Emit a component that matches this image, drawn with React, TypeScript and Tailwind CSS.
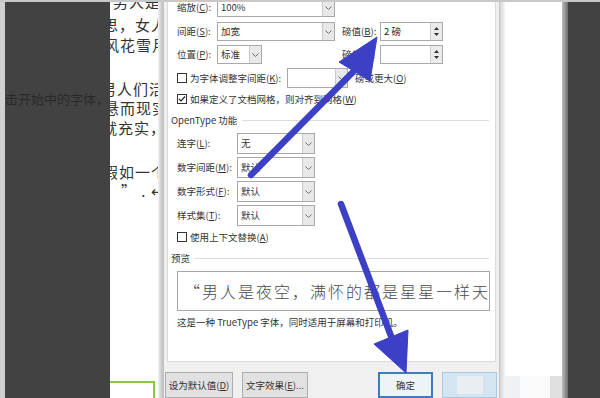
const ui = "font-['Noto_Sans_CJK_SC',sans-serif]"

function Chevron() {
  return (
    <svg width="7" height="4" viewBox="0 0 7 4">
      <path d="M0.5 0.5 L3.5 3.5 L6.5 0.5" fill="none" stroke="#6b6b6b" strokeWidth="1" />
    </svg>
  )
}

function Select({ className, value }: { className: string; value: string }) {
  return (
    <div className={`flex h-full items-stretch border border-[#a9a9a9] bg-white ${className}`}>
      <span className="flex flex-1 items-center pl-[3px] text-[#333]">{value}</span>
      <span className="flex w-[12px] items-center justify-center border-l border-[#c9c9c9] bg-[#e8e8e8]">
        <Chevron />
      </span>
    </div>
  )
}

function Spin({ value }: { value: string }) {
  return (
    <div className="flex h-full w-[63px] border border-[#a9a9a9] bg-white">
      <span className="flex flex-1 items-center pl-[3px] text-[#222]">{value}</span>
      <span className="flex w-[12px] flex-col items-center justify-center gap-[3px] border-l border-[#d0d0d0] bg-[#ececec]">
        <svg width="5" height="3" viewBox="0 0 5 3">
          <path d="M0 3 L2.5 0 L5 3Z" fill="#333" />
        </svg>
        <svg width="5" height="3" viewBox="0 0 5 3">
          <path d="M0 0 L2.5 3 L5 0Z" fill="#333" />
        </svg>
      </span>
    </div>
  )
}

function Check({ on }: { on?: boolean }) {
  return (
    <span className="flex h-[10px] w-[10px] shrink-0 items-center justify-center border border-[#333] bg-white">
      {on && (
        <svg width="8" height="8" viewBox="0 0 8 8">
          <path d="M1 4 L3 6 L7 1.5" fill="none" stroke="#222" strokeWidth="1.2" />
        </svg>
      )}
    </span>
  )
}

function Group({ title }: { title: string }) {
  return (
    <div className="ml-[-6px] flex items-center">
      <span className="text-[#333]">{title}</span>
      <span className="ml-[5px] mr-[6px] h-px flex-1 bg-[#dcdcdc]" />
    </div>
  )
}

function FeatureRow({ label, value, mt }: { label: React.ReactNode; value: string; mt: string }) {
  return (
    <div className={`flex h-[21px] items-center ${mt}`}>
      <span className="w-[60px] text-[#333]">{label}</span>
      <Select className="w-[78px]" value={value} />
    </div>
  )
}

function Dialog() {
  return (
    <div className={`flex h-full w-[337px] flex-col border-x border-[#c4c4c4] bg-[#f0f0f0] text-[9.5px] ${ui}`}>
      {/* tab panel */}
      <div className="ml-[3px] flex h-[363px] w-[329px] flex-col overflow-hidden border-x border-b border-[#dadada] bg-white pl-[9px]">
        <div className="mt-[-4px] flex h-[19px] items-center">
          <span className="w-[40px] text-[#333]">缩放(<u>C</u>):</span>
          <Select className="w-[118px]" value="100%" />
        </div>

        <div className="mt-[5px] flex h-[19px] items-center">
          <div className="flex h-full w-[158px] items-center">
            <span className="w-[40px] text-[#333]">间距(<u>S</u>):</span>
            <Select className="w-[118px]" value="加宽" />
          </div>
          <span className="ml-[7px] w-[38px] text-[#333]">磅值(<u>B</u>):</span>
          <Spin value="2 磅" />
        </div>

        <div className="mt-[4px] flex h-[19px] items-center">
          <div className="flex h-full w-[158px] items-center">
            <span className="w-[40px] text-[#333]">位置(<u>P</u>):</span>
            <Select className="w-[45px]" value="标准" />
          </div>
          <span className="ml-[7px] w-[38px] text-[#333]">磅值(<u>Y</u>):</span>
          <Spin value="" />
        </div>

        <div className="mt-[4px] flex h-[20px] items-center">
          <Check />
          <span className="ml-[3px] w-[97px] text-[#333]">为字体调整字间距(<u>K</u>):</span>
          <Select className="w-[61px]" value="" />
          <span className="ml-[7px] text-[#333]">磅或更大(<u>O</u>)</span>
        </div>

        <div className="mt-[4px] flex h-[14px] items-center">
          <Check on />
          <span className="ml-[3px] text-[#333]">如果定义了文档网格，则对齐到网格(<u>W</u>)</span>
        </div>

        <div className="mt-[7px] h-[14px]">
          <Group title="OpenType 功能" />
        </div>

        <FeatureRow mt="mt-[6px]" label={<>连字(<u>L</u>):</>} value="无" />
        <FeatureRow mt="mt-[3px]" label={<>数字间距(<u>M</u>):</>} value="默认" />
        <FeatureRow mt="mt-[3px]" label={<>数字形式(<u>F</u>):</>} value="默认" />
        <FeatureRow mt="mt-[3px]" label={<>样式集(<u>T</u>):</>} value="默认" />

        <div className="mt-[4px] flex h-[14px] items-center">
          <Check />
          <span className="ml-[3px] text-[#333]">使用上下文替换(<u>A</u>)</span>
        </div>

        <div className="mt-[7px] h-[14px]">
          <Group title="预览" />
        </div>

        <div className="mt-[6px] flex h-[40px] w-[313px] items-center overflow-hidden border border-[#a6a6a6] bg-white pl-[6px]">
          <span className="whitespace-nowrap text-[16px] font-light tracking-[2px] text-[#4a4a4a]">
            “男人是夜空，满怀的都是星星一样天真的梦
          </span>
        </div>

        <div className="mt-[4px] flex h-[14px] items-center text-[#333]">
          这是一种 TrueType 字体，同时适用于屏幕和打印机。
        </div>
      </div>

      {/* buttons */}
      <div className="flex pt-[10px]">
        <button className="ml-[1px] h-[26px] w-[68px] border border-[#adadad] bg-[#e1e1e1] text-[#333]">
          设为默认值(<u>D</u>)
        </button>
        <button className="ml-[9px] h-[26px] w-[66px] border border-[#adadad] bg-[#e1e1e1] text-[#333]">
          文字效果(<u>E</u>)...
        </button>
        <button className="ml-[70px] h-[26px] w-[55px] border-2 border-[#3d7dbd] bg-[#eef3f8] text-[#333]">
          确定
        </button>
        <div className="ml-[9px] flex h-[26px] w-[55px] items-center border border-[#a9c9e2] bg-[#d3e5f2] pl-[14px]">
          <span className="h-[18px] w-[26px] bg-[#e9eef2]" />
        </div>
      </div>
    </div>
  )
}

function PageText() {
  const lines = [
    { t: "男人是", c: "mt-[-10px] ml-[10px]" },
    { t: "思，女人", c: "mt-[3px]" },
    { t: "风花雪月", c: "mt-0 ml-[1px]" },
    { t: "男人们活", c: "mt-[24px] ml-[-2px]" },
    { t: "悬而现实", c: "mt-[-1px] ml-[1px]" },
    { t: "就充实，", c: "mt-0 ml-[-1px]" },
    { t: "假如一个", c: "mt-[24px]" },
    { t: "” . ↵", c: "mt-[-1px] ml-[18px]" },
  ]
  return (
    <div className="ml-[-7px] flex flex-col">
      {lines.map((l) => (
        <div
          key={l.t}
          className={`h-[20px] whitespace-nowrap text-[15px] leading-[20px] tracking-[1px] text-[#333] ${l.c}`}
        >
          {l.t}
        </div>
      ))}
    </div>
  )
}

function Arrows() {
  return (
    <svg className="pointer-events-none absolute inset-0" width="600" height="398" viewBox="0 0 600 398">
      <g fill="#3b40c6" stroke="#3b40c6">
        <line x1="251" y1="175" x2="353" y2="72" strokeWidth="6.5" strokeLinecap="round" />
        <polygon points="377,37 339,62 370,81" strokeWidth="1" />
        <line x1="341" y1="204" x2="391" y2="336" strokeWidth="6.5" strokeLinecap="round" />
        <polygon points="406,373 374,344 408,330" strokeWidth="1" />
      </g>
    </svg>
  )
}

export default function App() {
  return (
    <div className="relative flex h-[398px] w-[600px] flex-col overflow-hidden bg-[#424242]">
      <div className="h-[2px] bg-[#c8c8c8]" />
      <div className="flex h-[396px]">
        <div className="w-[5px] bg-[#cfcfcf]" />
        <div className={`w-[105px] pt-[83px] ${ui}`}>
          <span className="whitespace-nowrap text-[13px] text-[#2a2a2a]">击开始中的字体，</span>
        </div>

        {/* left document page */}
        <div className={`flex w-[48px] flex-col justify-between overflow-hidden bg-white ${ui}`}>
          <PageText />
          <div className="mb-0 h-[17px] w-[45px] border-r-2 border-t-2 border-[#8cc63f]" />
        </div>
        <div className="w-[5px] bg-gradient-to-r from-[#f2f2f2] to-[#bdbdbd]" />

        <Dialog />

        {/* right document page */}
        <div className="w-[5px] bg-gradient-to-r from-[#d4d4d4] to-[#f5f5f5]" />
        <div className="flex w-[57px] flex-col justify-end bg-white">
          <div className="flex h-[22px]">
            <span className="w-[15px] bg-[#eff2f4]" />
            <span className="w-[30px] bg-[#fafafa]" />
            <span className="w-[12px] bg-[#e0e0e0]" />
          </div>
        </div>
        <div className="w-[6px] bg-gradient-to-r from-[#bdbdbd] to-[#6e6e6e]" />
        <div className="w-[32px] bg-[#424242]" />
      </div>
      <Arrows />
    </div>
  )
}
